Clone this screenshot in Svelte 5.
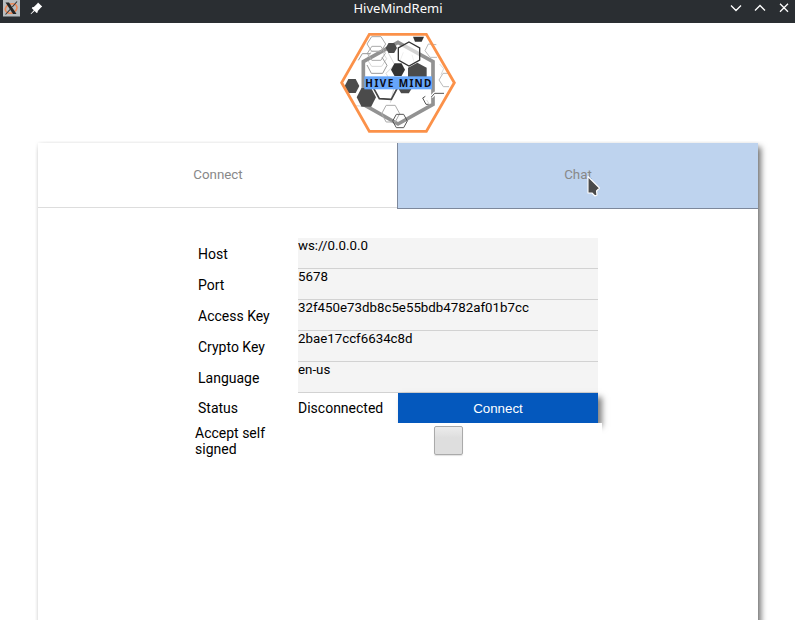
<script>
  const fields = [
    ['Host', 'ws://0.0.0.0'],
    ['Port', '5678'],
    ['Access Key', '32f450e73db8c5e55bdb4782af01b7cc'],
    ['Crypto Key', '2bae17ccf6634c8d'],
    ['Language', 'en-us']
  ];

  function hex(cx, cy, rx, ry, flat = true) {
    const pts = flat
      ? [[-1, 0], [-0.5, -1], [0.5, -1], [1, 0], [0.5, 1], [-0.5, 1]]
      : [[0, -1], [1, -0.5], [1, 0.5], [0, 1], [-1, 0.5], [-1, -0.5]];
    return pts.map(([x, y]) => `${cx + x * rx},${cy + y * ry}`).join(' ');
  }
</script>

<div class="window">
  <header class="titlebar">
    <svg class="app-icon" width="17" height="17" viewBox="0 0 17 17">
      <rect width="17" height="16.5" fill="#b9bdbf" />
      <ellipse cx="8" cy="8.5" rx="6" ry="4.5" fill="none" stroke="#ef8754" stroke-width="1.6" transform="rotate(-20 8 8)" />
      <path d="M2.5 2.5h3.5L13.5 14H10z" fill="#252525" />
      <path d="M14 1.5 9.3 7M7.5 9 2.5 14.5" stroke="#333" stroke-width="1.1" />
    </svg>
    <svg class="pin" width="13" height="13" viewBox="0 0 13 13">
      <path d="M8 .4 12.2 4.6 11 5.4 7.8 9 7.6 10.6 6.6 11 4.6 9 1 12.2 .6 11.8 3.8 8.2 1.8 6.2 2.2 5.2 3.8 5 7.4 1.6z" fill="#fff" />
    </svg>
    <span class="title">HiveMindRemi</span>
    <svg class="controls" width="64" height="12" viewBox="0 0 64 12" fill="none" stroke="#fff" stroke-width="1.3">
      <path d="M2 3.5 7 8.5 12 3.5M26 8.5 31 3.5 36 8.5M51 1.8 59 9.8M59 1.8 51 9.8" />
    </svg>
  </header>

  <div class="brand">
    <svg width="126" height="110" viewBox="0 0 378 330" fill="none">
      <polygon points="103,19 274,19 359,164 274,310 103,310 19,164" fill="#fff" />
      <g stroke="#d8d8d8" stroke-width="3">
        <polygon points={hex(125, 92, 30, 23)} />
        <path d="M160 75 179 110 153 136 177 180 166 224M205 73 196 96M231 80 238 105M314 108 326 122 318 140" />
        <path d="M344 136 324 136 312 156 325 176 342 176M304 50 280 48 270 68 285 88 306 88" stroke="#bbb" />
        <path d="M275 216 286 233M64 233 82 235" />
      </g>
      <polygon points="189,43 294,101 294,229 189,288 85,229 85,101" stroke="#929292" stroke-width="11" />
      <g stroke="#777" stroke-width="3">
        <polygon points={hex(124, 48, 28, 22)} stroke="#aaa" />
        <polygon points={hex(124, 76, 27, 21)} stroke="#aaa" />
        <path d="M70 97 82 77 107 77M96 111 109 136 143 136 156 112 141 88" stroke="#999" />
        <polygon points={hex(167, 257, 27, 25)} stroke="#aaa" />
        <polygon points={hex(195, 279, 22, 20)} stroke="#555" />
        <path d="M116 181 133 212 169 214 187 180" stroke="#444" stroke-width="5" />
        <path d="M289 207 299 196 327 196" stroke="#fff" stroke-width="10" />
        <path d="M271 205 263 210 273 229 281 229M289 207 299 196 327 196" stroke="#555" stroke-width="3" />
      </g>
      <polygon points={hex(222, 78, 32, 36, false)} fill="#fff" fill-opacity=".6" stroke="#333" stroke-width="4" />
      <g fill="#4b4b4b">
        <polygon points={hex(169, 60, 17, 15)} />
        <polygon points="234,26 267,26 260,41 240,41" fill="#333" />
        <polygon points={hex(189, 125, 21, 19)} fill="#333" />
        <polygon points={hex(247, 135, 28, 31, false)} />
        <polygon points={hex(210, 177, 23, 19)} />
        <polygon points={hex(51, 174, 22, 21)} />
        <polygon points={hex(94, 208, 29, 28)} />
      </g>
      <rect x="88" y="145" width="203" height="39" fill="#66a6fa" />
      <text x="91" y="176" textLength="84" lengthAdjust="spacing" class="wordmark">HIVE</text>
      <text x="191" y="176" textLength="98" lengthAdjust="spacing" class="wordmark">MIND</text>
      <polygon points="103,19 274,19 358,164 274,310 103,310 20,164" stroke="#fb9149" stroke-width="8.5" />
    </svg>
  </div>

  <main class="panel">
    <nav class="tabs">
      <div class="tab">Connect</div>
      <div class="tab hover">Chat
        <svg class="cursor" width="14" height="22" viewBox="0 0 14 22">
          <path d="M1 1.5V18h4l3 3 2-1-.5-4 3-3z" fill="#4b4b4b" stroke="#fff" stroke-width="1.1" stroke-linejoin="round" />
        </svg>
      </div>
    </nav>

    <form class="form">
      {#each fields as [label, value]}
        <div class="row">
          <span class="label">{label}</span>
          <div class="field">{value}</div>
        </div>
      {/each}
      <div class="row status">
        <span class="label">Status</span>
        <span class="state">Disconnected</span>
        <button type="button">Connect</button>
      </div>
      <div class="accept">
        <span>Accept self signed</span>
        <div class="box"></div>
      </div>
    </form>
  </main>
</div>

<style>
  :global(body) { margin: 0; background: #fff; }
  .window { width: 795px; height: 620px; overflow: hidden; background: #fff; font-family: Roboto, sans-serif; color: #000; }
  .titlebar { box-sizing: border-box; display: grid; grid-template-columns: 3px 17px 10px 13px 1fr 64px 2px; height: 23px; background: #2a2e32; position: relative; }
  .app-icon { grid-column: 2; }
  .pin { grid-column: 4; margin-top: 2px; }
  .title { position: absolute; left: 1px; right: 0; top: 0; text-align: center; font: 13px/17px "Noto Sans", sans-serif; color: #fcfcfc; }
  .controls { grid-column: 6; margin-top: 2px; }
  .brand { height: 115px; padding: 5px 0 0 335px; }
  .brand svg { display: block; }
  .wordmark { font: bold 30px "Noto Sans", "Open Sans", sans-serif; fill: #0b0b12; }
  .panel { width: 720px; height: 500px; margin-left: 38px; background: #fff; box-shadow: 3px 4px 6px rgba(0,0,0,.55), 0 0 3px rgba(0,0,0,.06); clip-path: inset(-2px -20px 0 -3px); }
  .tabs { display: grid; grid-template-columns: 359px 361px; height: 66px; }
  .tab { box-sizing: border-box; height: 65px; border-bottom: 1px solid #ddd; color: #888; font-size: 13.33px; line-height: 63px; text-align: center; padding-left: 1px; }
  .tab.hover { position: relative; height: 66px; padding-left: 0; background: #bed3ee; border-left: 1px solid #7d889b; border-bottom: 1px solid #7d889b; }
  .cursor { position: absolute; left: 189px; top: 32px; }
  .form { width: 400px; margin: 29px 0 0 160px; }
  .row { display: flex; height: 31px; }
  .label { width: 100px; font-size: 14px; line-height: 33px; }
  .field { box-sizing: border-box; width: 300px; height: 31px; background: #f4f4f4; border-bottom: 1px solid #d2d2d2; font-size: 13.3px; line-height: 16px; }
  .status { height: 30px; }
  .status .label, .state { line-height: 31px; }
  .state { width: 100px; font-size: 14px; }
  button { width: 200px; height: 30px; padding: 1px 0 0; border: 0; background: #0458bd; color: #fff; font: 13.33px/30px "Liberation Sans", Arial, sans-serif; box-shadow: 4px 4px 6px rgba(0,0,0,.5); }
  .accept { position: relative; display: flex; width: 407px; height: 36px; margin-left: -3px; background: #fff; }
  .accept span { width: 90px; margin-right: 149px; padding-top: 2px; font-size: 14px; line-height: 16px; }
  .box { box-sizing: border-box; width: 29px; height: 29px; margin-top: 3px; border: 1px solid #aaa; border-radius: 2px; background: linear-gradient(#ececec, #dedede 40%, #dedede); box-shadow: 0 1px 1px rgba(0,0,0,.12); }
</style>
